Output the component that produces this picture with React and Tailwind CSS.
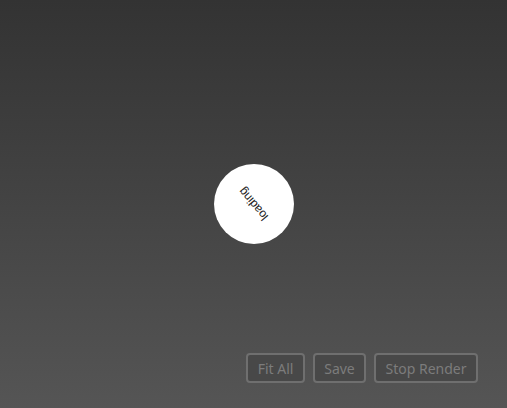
export default function App() {
  return (
    <div className="relative flex h-[408px] w-full items-center justify-center overflow-hidden bg-gradient-to-b from-[#333333] to-[#555555] font-['Noto_Sans',sans-serif]">
      <div className="flex h-[80px] w-[80px] items-center justify-center rounded-full bg-white">
        <span className="rotate-[230deg] text-[12px] leading-none text-[#222222] font-['Liberation_Sans',sans-serif]">
          loading
        </span>
      </div>

      <div className="absolute right-[29px] bottom-[25px] flex gap-2">
        <ToolButton label="Fit All" width="w-[59px]" />
        <ToolButton label="Save" width="w-[53px]" />
        <ToolButton label="Stop Render" width="w-[104px]" />
      </div>
    </div>
  )
}

function ToolButton({ label, width }) {
  return (
    <button
      className={`${width} flex h-[30px] items-center justify-center rounded-[4px] border-2 border-[#6f6f6f] bg-[#484848] text-[14px] text-[#7c7c7c]`}
    >
      {label}
    </button>
  )
}
